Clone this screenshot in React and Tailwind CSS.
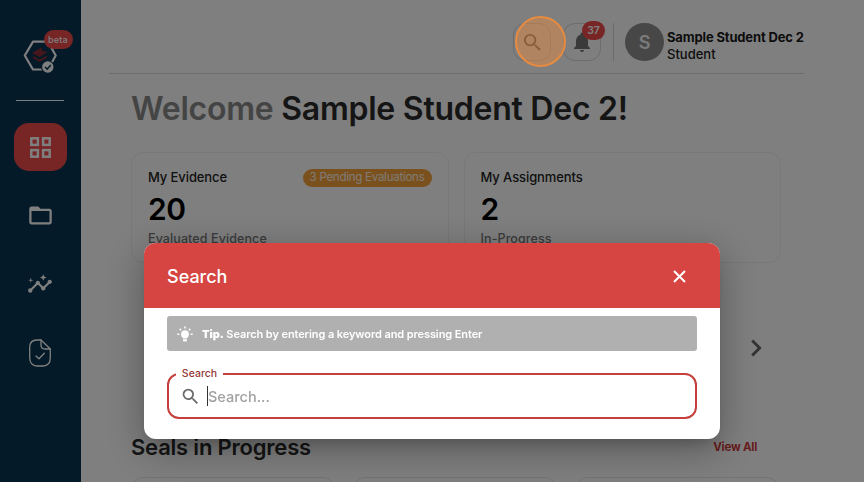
import { useState } from 'react';
import { MdSearch, MdNotifications, MdFolderOpen, MdInsights, MdChevronRight } from 'react-icons/md';

const cards = [
  { title: 'My Evidence', count: 20, label: 'Evaluated Evidence', pending: '3 Pending Evaluations' },
  { title: 'My Assignments', count: 2, label: 'In-Progress' },
];

function Logo() {
  return (
    <svg width="36" height="34" viewBox="0 0 36 34" fill="none">
      <path d="M10 2.6H25L32.7 16.5L25 30.5H10L1.8 16.5Z" stroke="#fff" strokeWidth="2.2" strokeLinejoin="round" />
      <path d="M9 14L18.5 8.5V11.5L24.5 13L16.5 18Z" fill="#8a2c36" />
      <path d="M10 17L16.5 20.5L24 16.4V18.4L16.5 23L10 19Z" fill="#8a2c36" />
      <circle cx="24.8" cy="28" r="6.7" fill="#0a3550" />
      <circle cx="24.8" cy="28" r="5.7" fill="#fff" />
      <path d="M22 28L24.2 30.1L27.8 26.1" stroke="#0a3550" strokeWidth="1.5" />
    </svg>
  );
}

function GridIcon() {
  return (
    <svg width="21" height="21" viewBox="0 0 21 21" fill="none" stroke="#fff" strokeWidth="2.5">
      <rect x="1.3" y="1.3" width="6.6" height="6.6" />
      <rect x="13.1" y="1.3" width="6.6" height="6.6" />
      <rect x="1.3" y="13.1" width="6.6" height="6.6" />
      <rect x="13.1" y="13.1" width="6.6" height="6.6" />
    </svg>
  );
}

function FileCheck() {
  return (
    <svg width="24" height="28" viewBox="0 0 24 28" fill="none" stroke="#fff" strokeWidth="1.3" strokeLinecap="round" strokeLinejoin="round">
      <path d="M13 1H9C4 1 1.7 4 1.7 8.5V18.5C1.7 24 4.5 27 9 27H15C19.5 27 22.3 24 22.3 18.5V10Z" />
      <path d="M13 1V6C13 8.8 14.5 10 17 10H22.3" />
      <path d="M8 17L11 19.8L16.3 14.2" />
    </svg>
  );
}

function Bulb() {
  return (
    <svg width="16" height="16" viewBox="0 0 16 16" fill="none">
      <circle cx="8" cy="8.2" r="3.9" fill="#fff" />
      <path d="M6 10H10V12.4H6ZM6 13.2H10V14.4Q10 15.4 9.2 15.4H6.8Q6 15.4 6 14.4Z" fill="#fff" />
      <path d="M8 .6V2.6M2.7 2.9L4.1 4.3M13.3 2.9L11.9 4.3M.3 8.2H2.3M13.7 8.2H15.7" stroke="#fff" strokeWidth="1.5" />
    </svg>
  );
}

function Sidebar() {
  return (
    <aside className="w-[81px] shrink-0 bg-[#0a3550] flex flex-col items-center text-white">
      <div className="relative mt-[39px]">
        <Logo />
        <span className="absolute left-[21px] -top-[9px] w-[29px] h-[19px] rounded-full bg-[#ef4a4b] flex items-center justify-center text-[9px] font-medium tracking-[0.2px]">beta</span>
      </div>
      <div className="mt-[27px] w-12 h-px bg-white mr-px" />
      <nav className="flex flex-col items-center mr-px">
        <button className="mt-[22px] w-[53px] h-12 rounded-[15px] bg-[#ef4a4b] flex items-center justify-center">
          <GridIcon />
        </button>
        <button className="mt-[31px] h-[26px]"><MdFolderOpen size={27} /></button>
        <button className="mt-[43px] h-[26px]"><MdInsights size={26} /></button>
        <button className="mt-[42px]"><FileCheck /></button>
      </nav>
    </aside>
  );
}

function Header() {
  return (
    <header className="ml-7 mr-[60px] h-[74px] pt-[23px] border-b border-[#d8d8d8] flex items-start justify-end">
      <button className="w-[38px] h-[38px] rounded-xl border border-[#d8d8d8] flex items-center justify-center text-[#666]">
        <MdSearch size={23} />
      </button>
      <button className="relative ml-3 w-[38px] h-[38px] rounded-xl border border-[#d8d8d8] flex items-center justify-center text-[#757575]">
        <MdNotifications size={24} />
        <span className="absolute left-[18px] -top-[3px] w-[23px] h-[19px] rounded-full bg-[#ef4a4b] text-white text-[10.5px] font-semibold flex items-center justify-center">37</span>
      </button>
      <div className="ml-3 w-px h-[38px] bg-[#d8d8d8]" />
      <div className="ml-[11px] w-[39px] h-[38px] rounded-full bg-[#8e8e8e] text-white/90 text-[18px] font-semibold flex items-center justify-center">S</div>
      <div className="ml-[3px] w-[137px] pt-[6px] text-[13px] leading-[17px] text-[#1a1a1a] whitespace-nowrap">
        <p className="font-bold tracking-[-0.15px]">Sample Student Dec 2</p>
        <p className="font-medium">Student</p>
      </div>
    </header>
  );
}

function StatCard({ title, count, label, pending }) {
  return (
    <div className="flex-1 h-[111px] rounded-xl border border-[#f0f0f0] px-4 pt-4 text-black">
      <div className="flex items-center justify-between h-[18px]">
        <h3 className="text-[13px] font-medium tracking-[-0.1px] text-[#222]">{title}</h3>
        {pending && (
          <span className="w-[129px] h-[18px] rounded-full bg-[#f5a23b] flex items-center justify-center text-[11.5px] tracking-[-0.25px] text-white/90 whitespace-nowrap">{pending}</span>
        )}
      </div>
      <p className="mt-1 text-[30px] leading-9 font-semibold tracking-[-0.5px]">{count}</p>
      <p className="mt-[3px] text-[12.5px] leading-[18px] font-medium tracking-[0.1px] text-[#777]">{label}</p>
    </div>
  );
}

function SearchModal({ onClose }) {
  const [query, setQuery] = useState('');

  return (
    <div className="fixed inset-0 bg-black/50 flex flex-col items-center justify-end pb-[43px]">
      <div className="w-[576px] h-[196px] rounded-xl overflow-hidden bg-white shadow-[0_10px_38px_3px_rgba(0,0,0,0.28),0_10px_15px_-7px_rgba(0,0,0,0.2)]">
        <div className="h-[65px] pt-px bg-[#d64541] text-white flex items-center justify-between pl-[23px] pr-[34px]">
          <h2 className="text-[18px] font-medium">Search</h2>
          <button onClick={onClose}>
            <svg width="13" height="13" viewBox="0 0 13 13" stroke="currentColor" strokeWidth="2">
              <path d="M1 1L12 12M12 1L1 12" />
            </svg>
          </button>
        </div>
        <div className="px-[23px] pt-2">
          <div className="h-[35px] rounded-[3px] bg-[#b0b0b0] text-white flex items-center pl-[10px]">
            <Bulb />
            <p className="ml-[9px] pt-px text-[11px] font-semibold tracking-[-0.09px]"><b>Tip.</b> Search by entering a keyword and pressing Enter</p>
          </div>
          <div className="relative mt-[22px] h-[46px] rounded-xl border-2 border-[#c5403c] flex items-center pl-[11px]">
            <label className="absolute left-[7px] -top-[9px] w-[47px] h-4 bg-white text-center text-[10.5px] leading-4 font-medium text-[#943735]">Search</label>
            <MdSearch size={21} className="text-[#6b6b6b]" />
            <span className="ml-[6px] w-px h-5 bg-[#333]" />
            <input value={query} onChange={(e) => setQuery(e.target.value)} placeholder="Search..." className="flex-1 pt-px outline-none text-[14.5px] font-medium placeholder:text-[#a2a2a2]" />
          </div>
        </div>
      </div>
    </div>
  );
}

export default function App() {
  const [open, setOpen] = useState(true);

  return (
    <div className="relative flex w-[864px] h-[482px] overflow-hidden bg-white font-['Inter','Liberation_Sans',sans-serif]">
      <Sidebar />
      <main className="flex-1 min-w-0">
        <Header />
        <section className="ml-[50px] mr-[83px]">
          <h1 className="mt-[14px] text-[32px] leading-[42px] font-semibold tracking-[-0.25px] text-[#2a2a2a] whitespace-nowrap"><span className="text-[#888]">Welcome</span> Sample Student Dec 2!</h1>
          <div className="mt-[22px] flex gap-[15px]">
            {cards.map((c) => <StatCard key={c.title} {...c} />)}
          </div>
          <div className="h-[170px] flex items-center justify-end pr-2">
            <MdChevronRight size={34} className="text-[#666]" />
          </div>
          <div className="flex items-center justify-between h-7 pr-6">
            <h2 className="text-[22px] font-semibold tracking-[-0.2px] text-[#2a2a2a]">Seals in Progress</h2>
            <a className="pt-0.5 text-[11.5px] tracking-[-0.25px] font-bold text-[#cf3b3b]">View All</a>
          </div>
          <div className="mt-4 flex gap-[18px]">
            {[0, 1, 2].map((i) => <div key={i} className="w-[204px] shrink-0 h-24 rounded-xl border border-[#e8e8e8]" />)}
          </div>
        </section>
      </main>
      {open && <SearchModal onClose={() => setOpen(false)} />}
      {/* Click highlight */}
      <div className="absolute left-[515px] top-[16px] w-[51px] h-[51px] rounded-full border-2 border-[#e58b42] bg-[#e28a42]/50 pointer-events-none" />
    </div>
  );
}
